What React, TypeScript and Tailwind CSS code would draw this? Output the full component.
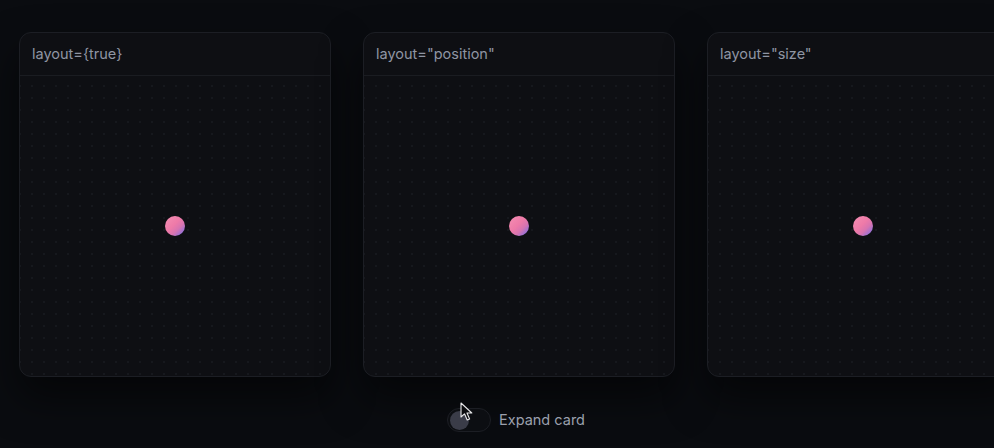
import React from "react";

const Card = ({ label }: { label: string }) => (
  <div className="w-[312px] h-[345px] shrink-0 rounded-[12px] border border-[#1c1e24] bg-[#0e0f13] shadow-[0_20px_40px_rgba(0,0,0,0.55)] flex flex-col overflow-hidden">
    <div className="h-[43px] shrink-0 flex items-center px-[12px] border-b border-[#1a1c21] text-[14.5px] text-[#8f95a3]">
      {label}
    </div>
    <div className="flex-1 flex items-center justify-center bg-[radial-gradient(circle,#16181d_1px,transparent_1.2px)] bg-[size:12px_12px] bg-[position:6px_4px]">
      <div className="w-[20px] h-[20px] rounded-full bg-[linear-gradient(135deg,#f58fb3_0%,#ee7aa8_45%,#d874b0_65%,#6a6ff0_100%)] -mt-[1px]" />
    </div>
  </div>
);

export default function App() {
  return (
    <div
      className="w-[994px] h-[448px] overflow-hidden bg-[#0a0c10] relative"
      style={{ fontFamily: "Inter, 'Noto Sans', sans-serif" }}
    >
      <div className="flex gap-[32px] pl-[19px] pt-[32px]">
        <Card label="layout={true}" />
        <Card label='layout="position"' />
        <Card label='layout="size"' />
      </div>
      <div className="flex items-center gap-[8px] mt-[31px] pl-[447px]">
        <div className="w-[44px] h-[24px] rounded-full border border-[#1c1e24] bg-[#0c0e12] p-[2px] flex items-center">
          <div className="w-[19px] h-[19px] rounded-full bg-[#3a3c48]" />
        </div>
        <span className="text-[14.5px] text-[#9ba0ad]">Expand card</span>
      </div>
      <svg className="absolute left-[460px] top-[402px]" width="14" height="20" viewBox="0 0 14 20">
        <path d="M1 1 L1 15 L4.5 11.8 L7.2 18 L9.6 17 L7 11 L11.8 11 Z" fill="#0b0c0f" stroke="#e8e8ea" strokeWidth="1.1" strokeLinejoin="round" />
      </svg>
    </div>
  );
}
